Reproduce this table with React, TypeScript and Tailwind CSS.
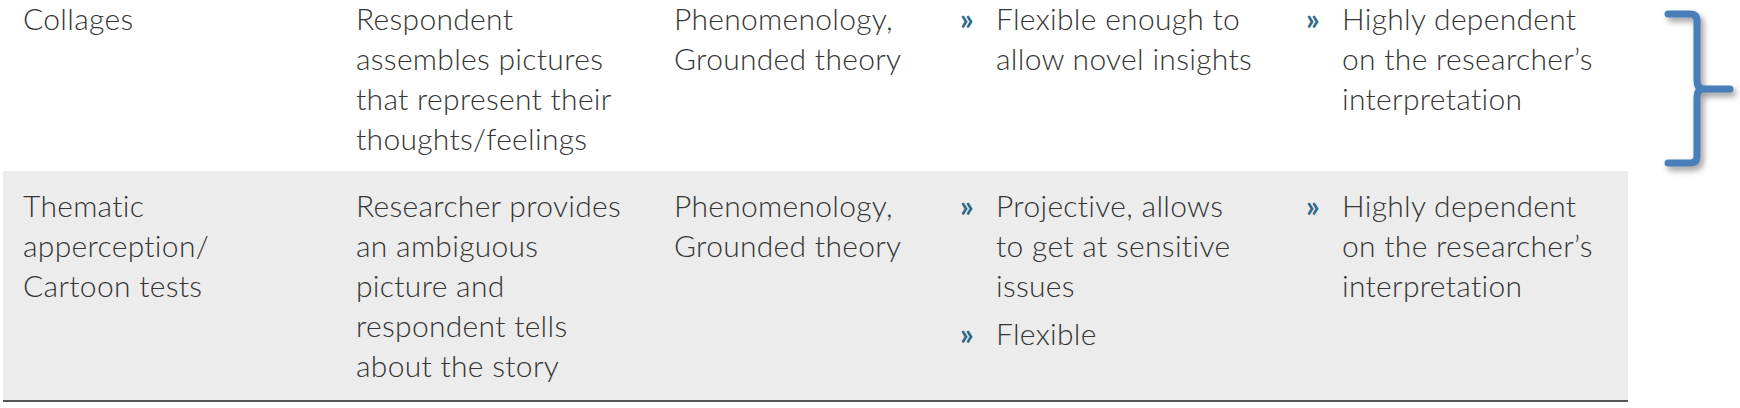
const cols = 'grid grid-cols-[333px_318px_286px_346px_342px]';

const Bullets = ({ items }: { items: string[][] }) => (
  <div className="flex flex-col gap-[8px]">
    {items.map((lines, i) => (
      <div key={i} className="flex">
        <span className="w-[36px] shrink-0 font-bold text-[#2c6888]">»</span>
        <span className="whitespace-nowrap">
          {lines.map((l, j) => (
            <span key={j} className="block">
              {l}
            </span>
          ))}
        </span>
      </div>
    ))}
  </div>
);

const Lines = ({ lines }: { lines: string[] }) => (
  <div className="whitespace-nowrap">
    {lines.map((l, i) => (
      <span key={i} className="block">
        {l}
      </span>
    ))}
  </div>
);

type Row = {
  method: string[];
  desc: string[];
  approach: string[];
  pros: string[][];
  cons: string[][];
};

const rows: Row[] = [
  {
    method: ['Collages'],
    desc: ['Respondent', 'assembles pictures', 'that represent their', 'thoughts/feelings'],
    approach: ['Phenomenology,', 'Grounded theory'],
    pros: [['Flexible enough to', 'allow novel insights']],
    cons: [['Highly dependent', 'on the researcher’s', 'interpretation']],
  },
  {
    method: ['Thematic', 'apperception/', 'Cartoon tests'],
    desc: ['Researcher provides', 'an ambiguous', 'picture and', 'respondent tells', 'about the story'],
    approach: ['Phenomenology,', 'Grounded theory'],
    pros: [['Projective, allows', 'to get at sensitive', 'issues'], ['Flexible']],
    cons: [['Highly dependent', 'on the researcher’s', 'interpretation']],
  },
];

const Bracket = () => (
  <svg width="104" height="180" viewBox="0 0 104 180" className="drop-shadow-[3px_4px_3px_rgba(0,0,0,0.4)]">
    <path
      d="M38 14 H60 Q67 14 67 21 V80 Q67 89 74 89 H100 M74 89 Q67 89 67 98 V156 Q67 163 60 163 H38"
      fill="none"
      stroke="#4a7ebb"
      strokeWidth="7"
      strokeLinecap="round"
    />
  </svg>
);

export default function App() {
  return (
    <div className="w-[1740px] h-[408px] bg-white overflow-hidden font-['Lato',sans-serif] font-light text-[30px] leading-[40px] tracking-[0.3px] text-[#353535]">
      <div className="flex">
        <div className="ml-[3px] w-[1625px] shrink-0 -mt-[2px]">
          {rows.map((r, i) => (
            <div
              key={i}
              className={
                i === 0
                  ? `${cols} pb-[13px]`
                  : `${cols} bg-[#ebeceb] pt-[14px] pb-[15px] border-b-2 border-[#555555]`
              }
            >
              <div className="pl-5">
                <Lines lines={r.method} />
              </div>
              <div className="pl-5">
                <Lines lines={r.desc} />
              </div>
              <div className="pl-5">
                <Lines lines={r.approach} />
              </div>
              <div className="pl-5">
                <Bullets items={r.pros} />
              </div>
              <div className="pl-5">
                <Bullets items={r.cons} />
              </div>
            </div>
          ))}
        </div>
        <div className="pl-[2px]">
          <Bracket />
        </div>
      </div>
    </div>
  );
}
